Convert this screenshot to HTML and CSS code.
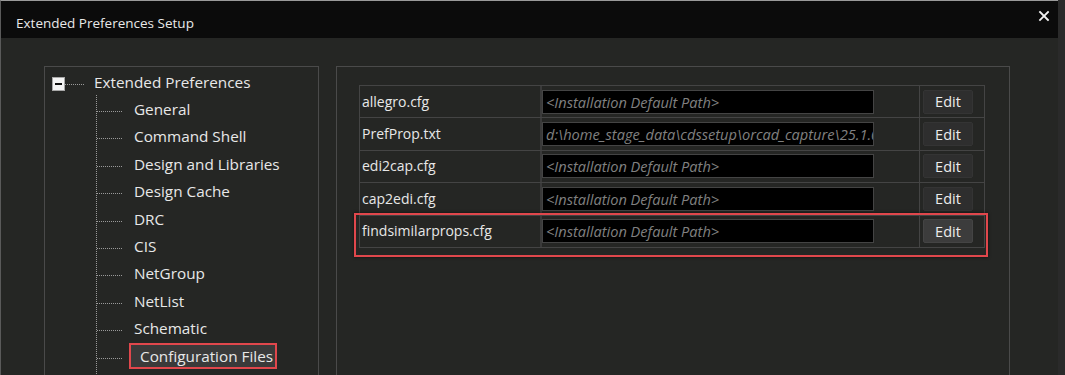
FILE: index.html
```html
<!DOCTYPE html>
<html lang="en">
<head>
    <meta charset="UTF-8">
    <title>Extended Preferences Setup</title>
    <link rel="stylesheet" href="styles.css">
</head>
<body>
    <div class="window">
        <div class="titlebar">
            <span class="title">Extended Preferences Setup</span>
            <span class="close">
                <svg width="12" height="12" viewBox="0 0 12 12">
                    <path d="M2 2 L10 10 M10 2 L2 10" stroke="#f2f2f2" stroke-width="1.8" stroke-linecap="square"/>
                </svg>
            </span>
        </div>
        <div class="content">
            <div class="panel tree-panel">
                <div class="tree-root">
                    <span class="toggle"><span class="minus"></span></span>
                    <span class="root-line"></span>
                    <span class="label">Extended Preferences</span>
                </div>
                <ul class="tree-children">
                    <li><span class="label">General</span></li>
                    <li><span class="label">Command Shell</span></li>
                    <li><span class="label">Design and Libraries</span></li>
                    <li><span class="label">Design Cache</span></li>
                    <li><span class="label">DRC</span></li>
                    <li><span class="label">CIS</span></li>
                    <li><span class="label">NetGroup</span></li>
                    <li><span class="label">NetList</span></li>
                    <li><span class="label">Schematic</span></li>
                    <li class="selected"><span class="label">Configuration Files</span></li>
                </ul>
            </div>
            <div class="panel files-panel">
                <div class="files">
                    <div class="file-row">
                        <div class="cell name">allegro.cfg</div>
                        <div class="cell path"><div class="path-box default">&lt;Installation Default Path&gt;</div></div>
                        <div class="cell action"><button class="edit-btn">Edit</button></div>
                    </div>
                    <div class="file-row">
                        <div class="cell name">PrefProp.txt</div>
                        <div class="cell path"><div class="path-box">d:\home_stage_data\cdssetup\orcad_capture\25.1.0</div></div>
                        <div class="cell action"><button class="edit-btn">Edit</button></div>
                    </div>
                    <div class="file-row">
                        <div class="cell name">edi2cap.cfg</div>
                        <div class="cell path"><div class="path-box default">&lt;Installation Default Path&gt;</div></div>
                        <div class="cell action"><button class="edit-btn">Edit</button></div>
                    </div>
                    <div class="file-row">
                        <div class="cell name">cap2edi.cfg</div>
                        <div class="cell path"><div class="path-box default">&lt;Installation Default Path&gt;</div></div>
                        <div class="cell action"><button class="edit-btn">Edit</button></div>
                    </div>
                    <div class="file-row highlighted">
                        <div class="cell name">findsimilarprops.cfg</div>
                        <div class="cell path"><div class="path-box default">&lt;Installation Default Path&gt;</div></div>
                        <div class="cell action"><button class="edit-btn active">Edit</button></div>
                    </div>
                </div>
            </div>
        </div>
    </div>
</body>
</html>
```

FILE: styles.css
```css
* {
    box-sizing: border-box;
}

body {
    margin: 0;
    background-color: #2a2a2a;
    font-family: "Open Sans", "Noto Sans", sans-serif;
    color: #e8e8e8;
    overflow: hidden;
}

.window {
    width: 1058px;
    height: 375px;
    overflow: hidden;
    background-color: #252624;
    border-top: 1px solid #9a9a9a;
    border-left: 1px solid #5a5a5a;
}

.titlebar {
    height: 37px;
    background-color: #0b0b0b;
    display: flex;
    align-items: center;
    justify-content: space-between;
    padding: 0 10px 0 15px;
}

.title {
    font-size: 13.5px;
    color: #e8e8e8;
    padding-top: 7px;
}

.close {
    display: flex;
    margin-top: -8px;
    margin-right: -2px;
}

.content {
    display: flex;
    gap: 17px;
    padding: 28px 0 0 43px;
}

.panel {
    border: 1px solid #4a4a4a;
    height: 330px;
}

/* tree */
.tree-panel {
    width: 275px;
    padding: 1px 0 0 7px;
    font-size: 15.3px;
}

.tree-root {
    display: flex;
    align-items: center;
    height: 27.4px;
}

.toggle {
    width: 13px;
    height: 14px;
    background-color: #f4f4f4;
    border: 1px solid #a8a8a8;
    display: flex;
    align-items: center;
    justify-content: center;
    margin-top: 5px;
}

.minus {
    width: 7px;
    height: 2px;
    background-color: #111;
}

.root-line {
    width: 19px;
    height: 1px;
    margin-top: 5px;
    background-image: repeating-linear-gradient(to right, #9a9a9a 0 1px, transparent 1px 2px);
}

.tree-root .label {
    margin-left: 10px;
}

.tree-children {
    list-style: none;
    margin: 0 0 0 44px;
    padding: 0 0 20px 0;
    background-image: repeating-linear-gradient(to bottom, #9a9a9a 0 1px, transparent 1px 2px);
    background-size: 1px 100%;
    background-repeat: no-repeat;
}

.tree-children li {
    display: flex;
    align-items: center;
    height: 27.4px;
}

.tree-children li::before {
    content: "";
    width: 25px;
    height: 1px;
    margin-left: 1px;
    margin-top: 5px;
    background-image: repeating-linear-gradient(to right, #9a9a9a 0 1px, transparent 1px 2px);
}

.tree-children .label {
    margin-left: 12px;
}

.tree-children li.selected .label {
    margin-left: 7px;
    padding: 0 2px 0 9px;
    height: 26px;
    line-height: 23px;
    background-color: #3a3a3a;
    border: 2px solid #e0474c;
    margin-top: 1px;
}

/* config files */
.files-panel {
    width: 674px;
    padding: 18px 0 0 22px;
}

.files {
    width: 626px;
    border: 1px solid #444;
    border-bottom: none;
}

.file-row {
    display: flex;
    height: 32.4px;
    border-bottom: 1px solid #444;
    position: relative;
    font-size: 14px;
}

.file-row.highlighted::after {
    content: "";
    position: absolute;
    left: -6px;
    right: -4px;
    top: -3px;
    bottom: -10px;
    border: 2px solid #e0474c;
    box-shadow: 0 0 3px rgba(0, 0, 0, 0.6);
    pointer-events: none;
}

.cell {
    display: flex;
    align-items: center;
}

.name {
    width: 182px;
    padding-left: 2px;
    padding-bottom: 1px;
    border-right: 2px solid #3a3a3a;
}

.path {
    width: 378px;
    border-right: 1px solid #444;
}

.path-box {
    width: 332px;
    height: 24px;
    background-color: #000;
    border: 1px solid #444;
    padding: 0 0 0 3px;
    font-size: 14.6px;
    font-style: italic;
    color: #808080;
    line-height: 22px;
    white-space: nowrap;
    overflow: hidden;
}

.action {
    width: 63px;
    padding-left: 3px;
}

.edit-btn {
    width: 50px;
    height: 24px;
    background-color: #2e2e2e;
    border: 1px solid #343434;
    border-radius: 2px;
    color: #ececec;
    font-family: "Open Sans", "Noto Sans", sans-serif;
    font-size: 14.5px;
    padding: 0;
}

.edit-btn.active {
    background-color: #3c3c3c;
    border-color: #444;
}
```
